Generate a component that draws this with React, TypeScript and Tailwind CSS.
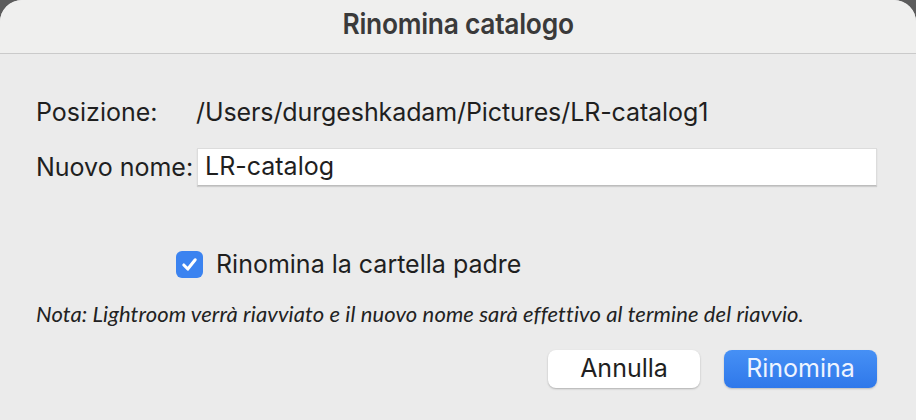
export default function App() {
  return (
    <div className="w-[916px] h-[420px] bg-[#5c5c5c] overflow-hidden">
      <div
        className="w-full h-full rounded-t-[22px] bg-[#ebebeb] flex flex-col text-[#1f1f1f]"
        style={{ fontFamily: "Inter, 'Liberation Sans', sans-serif" }}
      >
        <div className="h-[54px] shrink-0 bg-[#efefee] border-b border-[#cacaca] rounded-t-[22px] flex items-center justify-center pb-[5px]">
          <span className="text-[29px] font-semibold text-[#3a3a3a] tracking-[-0.3px] scale-x-[0.91]">
            Rinomina catalogo
          </span>
        </div>

        <div className="flex flex-col pl-[36px] pr-[39px] pt-[43px]">
          <div className="grid grid-cols-[161px_1fr] items-center gap-y-[21px]">
            <span className="text-[25px] leading-[30px]">Posizione:</span>
            <span className="text-[25px] leading-[30px] -ml-px tracking-[-0.1px]">/Users/durgeshkadam/Pictures/LR-catalog1</span>
            <span className="text-[25px] leading-[30px]">Nuovo nome:</span>
            <div className="h-[38px] bg-white border border-[#dcdcdc] border-b-[#bdbdbd] shadow-[0_1px_1px_rgba(0,0,0,0.12)] flex items-center px-[7px] text-[25px]">
              LR-catalog
            </div>
          </div>

          <div className="mt-[63px] ml-[140px] flex items-center gap-[13px] h-[30px]">
            <span className="w-[27px] h-[27px] rounded-[6px] bg-[#3b83f0] flex items-center justify-center">
              <svg width="19" height="19" viewBox="0 0 20 20" fill="none">
                <path d="M4 10.5 L8.2 14.8 L16 5" stroke="white" strokeWidth="3.2" strokeLinecap="round" strokeLinejoin="round" />
              </svg>
            </span>
            <span className="text-[25px] leading-[30px]">Rinomina la cartella padre</span>
          </div>

          <p
            className="mt-[22px] text-[22px] leading-[26px] italic text-[#222] tracking-[0.1px]"
            style={{ fontFamily: "Lato, 'Liberation Sans', sans-serif" }}
          >
            Nota: Lightroom verrà riavviato e il nuovo nome sarà effettivo al termine del riavvio.
          </p>

          <div className="mt-[23px] flex justify-end gap-[24px]">
            <button className="w-[152px] h-[38px] rounded-[8px] bg-white shadow-[0_1px_2px_rgba(0,0,0,0.25)] text-[25px] text-[#1f1f1f]">
              Annulla
            </button>
            <button className="w-[153px] h-[38px] rounded-[8px] bg-gradient-to-b from-[#4690f5] to-[#2f78ea] shadow-[0_1px_2px_rgba(0,0,0,0.2)] text-[25px] text-[#eef4ff]">
              Rinomina
            </button>
          </div>
        </div>
      </div>
    </div>
  );
}
